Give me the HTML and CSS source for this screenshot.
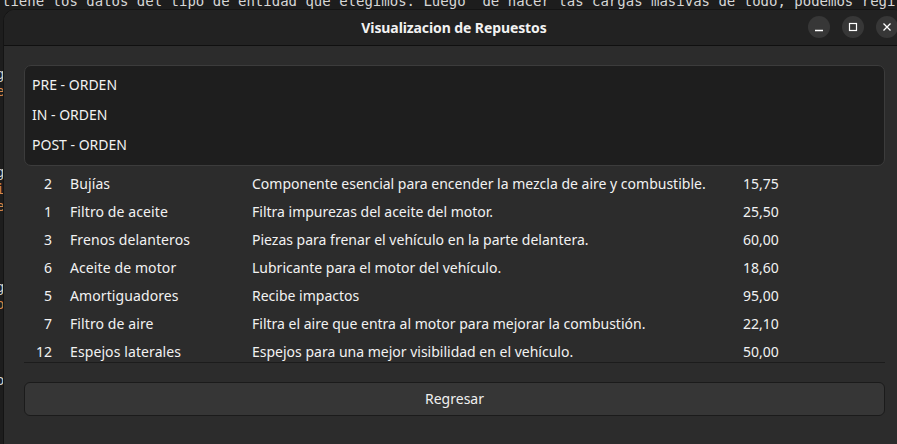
FILE: index.html
```html
<!DOCTYPE html>
<html lang="es">
<head>
<meta charset="utf-8">
<title>Visualizacion de Repuestos</title>
<link rel="stylesheet" href="styles.css">
</head>
<body>
<div class="terminal">
  <div class="term-line term-top">tiene los datos del tipo de entidad que elegimos. Luego  de hacer las cargas masivas de todo, podemos regi</div>
  <div class="term-line l1"><span class="w">g</span></div>
  <div class="term-line l2"><span class="o">e</span></div>
  <div class="term-line l3"><span class="w">g</span></div>
  <div class="term-line l4"><span class="o">i</span></div>
  <div class="term-line l5"><span class="o">e</span></div>
  <div class="term-line l6"><span class="w">g</span></div>
  <div class="term-line l7"><span class="o">o</span></div>
  <div class="term-line l8"><span class="w">o</span></div>
</div>

<div class="window">
  <header class="titlebar">
    <div class="title">Visualizacion de Repuestos</div>
    <div class="controls">
      <button class="ctl" aria-label="Minimizar">
        <svg width="12" height="12" viewBox="0 0 12 12"><path d="M2 9.5h8" stroke="#fff" stroke-width="1.3"/></svg>
      </button>
      <button class="ctl" aria-label="Maximizar">
        <svg width="12" height="12" viewBox="0 0 12 12"><rect x="2.5" y="2.5" width="7" height="7" fill="none" stroke="#fff" stroke-width="1.2"/></svg>
      </button>
      <button class="ctl" aria-label="Cerrar">
        <svg width="12" height="12" viewBox="0 0 12 12"><path d="M2.5 2.5l7 7M9.5 2.5l-7 7" stroke="#fff" stroke-width="1.3"/></svg>
      </button>
    </div>
  </header>

  <main class="content">
    <ul class="orders">
      <li>PRE - ORDEN</li>
      <li>IN - ORDEN</li>
      <li>POST - ORDEN</li>
    </ul>

    <div class="table">
      <div class="row"><span class="id">2</span><span class="name">Bujías</span><span class="desc">Componente esencial para encender la mezcla de aire y combustible.</span><span class="price">15,75</span></div>
      <div class="row"><span class="id">1</span><span class="name">Filtro de aceite</span><span class="desc">Filtra impurezas del aceite del motor.</span><span class="price">25,50</span></div>
      <div class="row"><span class="id">3</span><span class="name">Frenos delanteros</span><span class="desc">Piezas para frenar el vehículo en la parte delantera.</span><span class="price">60,00</span></div>
      <div class="row"><span class="id">6</span><span class="name">Aceite de motor</span><span class="desc">Lubricante para el motor del vehículo.</span><span class="price">18,60</span></div>
      <div class="row"><span class="id">5</span><span class="name">Amortiguadores</span><span class="desc">Recibe impactos</span><span class="price">95,00</span></div>
      <div class="row"><span class="id">7</span><span class="name">Filtro de aire</span><span class="desc">Filtra el aire que entra al motor para mejorar la combustión.</span><span class="price">22,10</span></div>
      <div class="row"><span class="id">12</span><span class="name">Espejos laterales</span><span class="desc">Espejos para una mejor visibilidad en el vehículo.</span><span class="price">50,00</span></div>
    </div>

    <button class="back">Regresar</button>
  </main>
</div>
</body>
</html>
```

FILE: styles.css
```css
html, body {
  margin: 0;
  padding: 0;
  width: 897px;
  height: 444px;
  overflow: hidden;
  background: #1d1d1d;
}

.terminal {
  position: absolute;
  inset: 0;
  font-family: "DejaVu Sans Mono", monospace;
  font-size: 14px;
  color: #d6d6d6;
  white-space: pre;
}

.term-line {
  position: absolute;
  left: -4px;
  line-height: 17px;
}

.term-top { top: -7px; left: 2px; }
.term-line .w { color: #cfcfcf; }
.term-line .o { color: #d4874a; }
.l1 { top: 66px; }
.l2 { top: 83px; }
.l3 { top: 164px; }
.l4 { top: 181px; }
.l5 { top: 198px; }
.l6 { top: 279px; }
.l7 { top: 296px; }
.l8 { top: 372px; }

.window {
  position: absolute;
  left: 3px;
  top: 9px;
  width: 900px;
  height: 450px;
  background: #2c2c2c;
  border: 1px solid #141414;
  border-radius: 12px 12px 0 0;
  overflow: hidden;
  font-family: "Noto Sans", "Open Sans", sans-serif;
  color: #f2f2f2;
}

.titlebar {
  height: 35px;
  background: #222222;
  border-bottom: 1px solid #101010;
  display: flex;
  align-items: center;
  justify-content: center;
  position: relative;
}

.title {
  font-weight: 700;
  font-size: 14px;
  letter-spacing: -0.1px;
}

.controls {
  position: absolute;
  right: 6px;
  top: 6px;
  display: flex;
  gap: 12px;
}

.ctl {
  width: 22px;
  height: 22px;
  border-radius: 50%;
  border: 0;
  padding: 0;
  background: #373737;
  display: flex;
  align-items: center;
  justify-content: center;
}

.content {
  padding: 19px 19px 0 20px;
  display: flex;
  flex-direction: column;
}

.orders {
  list-style: none;
  margin: 0;
  padding: 4px 0 4px 0;
  height: 91px;
  background: #1e1e1e;
  border: 1px solid #3c3c3c;
  border-radius: 7px;
  font-size: 14px;
}

.orders li {
  height: 30px;
  line-height: 30px;
  padding-left: 7px;
  letter-spacing: 0;
}

.table {
  margin-top: 3px;
  height: 193px;
  overflow: hidden;
  border-bottom: 1px solid #1c1c1c;
}

.row {
  display: grid;
  grid-template-columns: 28px 200px 491px 60px;
  height: 28px;
  align-items: center;
  font-size: 14px;
}

.row .id {
  text-align: right;
}

.row .name {
  padding-left: 18px;
  letter-spacing: 0.1px;
}

.row .desc {
  white-space: nowrap;
  letter-spacing: 0;
}

.back {
  margin-top: 19px;
  height: 34px;
  padding: 0 0 2px;
  background: #363636;
  border: 1px solid #1b1b1b;
  border-radius: 6px;
  color: #f0f0f0;
  font-family: "Noto Sans", "Open Sans", sans-serif;
  font-size: 14px;
  letter-spacing: 0;
}
```
